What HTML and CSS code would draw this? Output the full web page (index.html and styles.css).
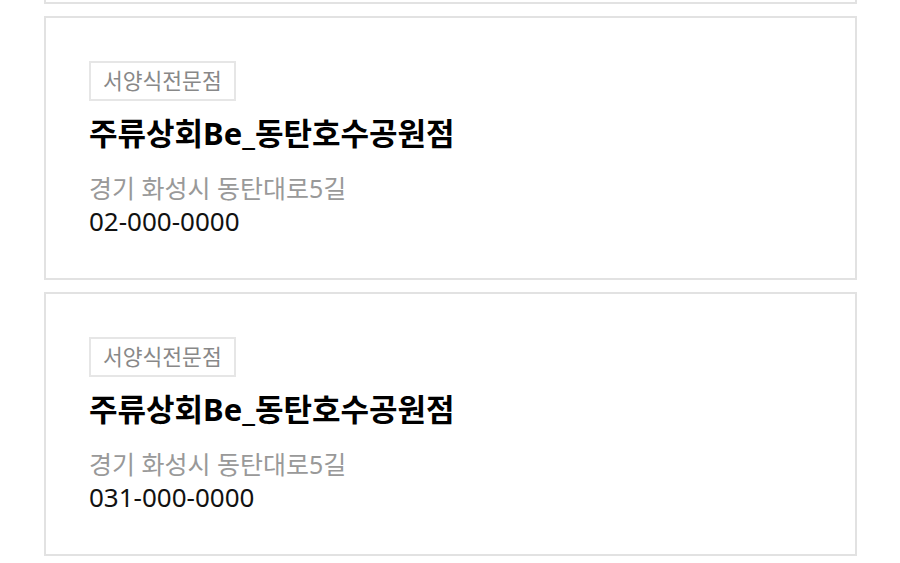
FILE: index.html
```html
<!DOCTYPE html>
<html lang="ko">
<head>
	<meta charset="UTF-8">
	<title>매장 목록</title>
	<link rel="stylesheet" href="styles.css">
</head>
<body>
	<ul class="shoplist">
		<li class="shop">
			<span class="cate">서양식전문점</span>
			<h3 class="name">주류상회Be_동탄호수공원점</h3>
			<p class="addr">경기 화성시 동탄대로5길</p>
			<p class="tel">02-000-0000</p>
		</li>
		<li class="shop">
			<span class="cate">서양식전문점</span>
			<h3 class="name">주류상회Be_동탄호수공원점</h3>
			<p class="addr">경기 화성시 동탄대로5길</p>
			<p class="tel">02-000-0000</p>
		</li>
		<li class="shop">
			<span class="cate">서양식전문점</span>
			<h3 class="name">주류상회Be_동탄호수공원점</h3>
			<p class="addr">경기 화성시 동탄대로5길</p>
			<p class="tel">031-000-0000</p>
		</li>
	</ul>
</body>
</html>
```
FILE: styles.css
```css
	*{
		margin:0px;
		padding:0px;
		box-sizing:border-box;
	}
	body{
		background:#fff;
		font-family:"Noto Sans","Noto Sans CJK KR",sans-serif;
		color:#111;
		overflow:hidden;
	}
	ul li{
		list-style:none;
	}
	/* 목록이 스크롤된 상태 */
	.shoplist{
		margin-top:-260px;
		padding:0 43px 0 44px;
		display:flex;
		flex-direction:column;
		gap:12px;
	}
	.shop{
		height:264px;
		border:2px solid #e2e2e2;
		padding:43px 43px 0;
	}
	.cate{
		display:inline-block;
		height:40px;
		line-height:36px;
		padding:0 12px;
		border:2px solid #e6e6e6;
		font-size:21.5px;
		color:#888;
	}
	.name{
		margin-top:10px;
		font-size:31px;
		font-weight:700;
		line-height:44px;
		color:#000;
	}
	.addr{
		margin-top:16px;
		font-size:25px;
		line-height:34px;
		color:#999;
	}
	.tel{
		font-size:26px;
		line-height:33px;
		color:#111;
	}
```
